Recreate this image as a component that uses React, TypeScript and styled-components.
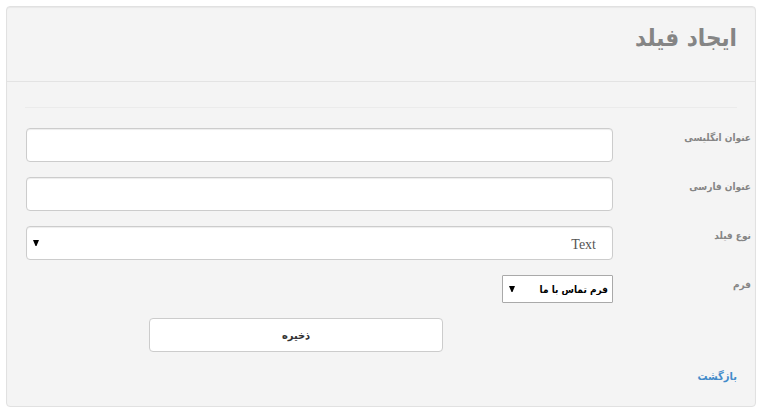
import React from "react";
import styled, { createGlobalStyle } from "styled-components";

const Global = createGlobalStyle`
  *, *::before, *::after { box-sizing: border-box; }
  body {
    margin: 0;
    background: #fff;
    color: #858585;
    font-family: "DejaVu Sans Condensed", "DejaVu Sans", sans-serif;
    font-size: 10px;
    line-height: 20px;
  }
`;

const Panel = styled.main`
  margin: 6px 4px 8px 6px;
  padding-bottom: 19px;
  background: #f4f4f4;
  border: 1px solid #e1e1e1;
  border-radius: 4px;
  box-shadow: inset 0 1px 1px rgba(0, 0, 0, 0.05);
`;

const Header = styled.header`
  padding: 10px 18px 22px;
  border-bottom: 1px solid #e3e3e3;
`;

const Title = styled.h1`
  margin: 0;
  font-size: 24px;
  line-height: 42px;
  font-weight: 700;
`;

const Rule = styled.hr`
  margin: 25px 18px 20px;
  border: 0;
  border-top: 1px solid #ebebeb;
`;

const Form = styled.form`
  display: grid;
  gap: 15px;
`;

const Row = styled.div`
  display: grid;
  grid-template-columns: 142px 1fr;
  align-items: start;
  padding-left: 19px;
`;

const Label = styled.label`
  padding-right: 4px;
  font-weight: 700;
`;

const Input = styled.input`
  width: 100%;
  height: 34px;
  padding: 6px 12px;
  border: 1px solid #ccc;
  border-radius: 4px;
  background: #fff;
  color: #555;
  font: 14px "Liberation Serif", serif;
  box-shadow: inset 0 1px 1px rgba(0, 0, 0, 0.075);
`;

const SelectBox = styled.div<{ $compact?: boolean }>`
  position: relative;
  width: ${(p) => (p.$compact ? "111px" : "100%")};
`;

const Select = styled.select<{ $compact?: boolean }>`
  display: block;
  appearance: none;
  width: 100%;
  height: ${(p) => (p.$compact ? "28px" : "34px")};
  padding: ${(p) => (p.$compact ? "0 4px 0 20px" : "2px 16px 0 20px")};
  border: 1px solid ${(p) => (p.$compact ? "#a9a9a9" : "#ccc")};
  border-radius: ${(p) => (p.$compact ? "1px" : "4px")};
  background: #fff;
  color: ${(p) => (p.$compact ? "#000" : "#555")};
  font-family: ${(p) => (p.$compact ? "inherit" : '"Liberation Serif", serif')};
  font-size: ${(p) => (p.$compact ? "10px" : "14px")};
  font-weight: ${(p) => (p.$compact ? 700 : 400)};
  box-shadow: ${(p) => (p.$compact ? "none" : "inset 0 1px 1px rgba(0, 0, 0, 0.075)")};
`;

const Arrow = styled.svg`
  position: absolute;
  left: 7px;
  top: 50%;
  width: 6px;
  height: 6px;
  margin-top: -3px;
  fill: #000;
  pointer-events: none;
`;

const Actions = styled.div`
  grid-column: 2;
  display: grid;
  grid-template-columns: 29% 50%;
`;

const SaveButton = styled.button`
  grid-column: 2;
  height: 34px;
  border: 1px solid #ccc;
  border-radius: 4px;
  background: #fff;
  color: #333;
  font-family: inherit;
  font-size: 11px;
  font-weight: 700;
  cursor: pointer;
`;

const Footer = styled.footer`
  margin-top: 15px;
  padding: 0 18px;
  font-size: 11px;
`;

const BackLink = styled.a`
  color: #428bca;
  font-weight: 700;
  text-decoration: none;
`;

function DownArrow() {
  return (
    <Arrow viewBox="0 0 6 6" aria-hidden="true">
      <path d="M0 0h6L3.5 6h-1z" />
    </Arrow>
  );
}

export default function App() {
  return (
    <>
      <Global />
      <Panel dir="rtl" lang="fa">
        <Header>
          <Title>ایجاد فیلد</Title>
        </Header>
        <Rule />
        <Form onSubmit={(e) => e.preventDefault()}>
          <Row>
            <Label htmlFor="title-en">عنوان انگلیسی</Label>
            <Input id="title-en" type="text" />
          </Row>
          <Row>
            <Label htmlFor="title-fa">عنوان فارسی</Label>
            <Input id="title-fa" type="text" />
          </Row>
          <Row>
            <Label htmlFor="field-type">نوع فیلد</Label>
            <SelectBox>
              <Select id="field-type">
                <option>Text</option>
              </Select>
              <DownArrow />
            </SelectBox>
          </Row>
          <Row>
            <Label htmlFor="form-name">فرم</Label>
            <SelectBox $compact>
              <Select id="form-name" $compact>
                <option>فرم تماس با ما</option>
              </Select>
              <DownArrow />
            </SelectBox>
          </Row>
          <Row>
            <Actions>
              <SaveButton type="submit">ذخیره</SaveButton>
            </Actions>
          </Row>
        </Form>
        <Footer>
          <BackLink href="#">بازگشت</BackLink>
        </Footer>
      </Panel>
    </>
  );
}
